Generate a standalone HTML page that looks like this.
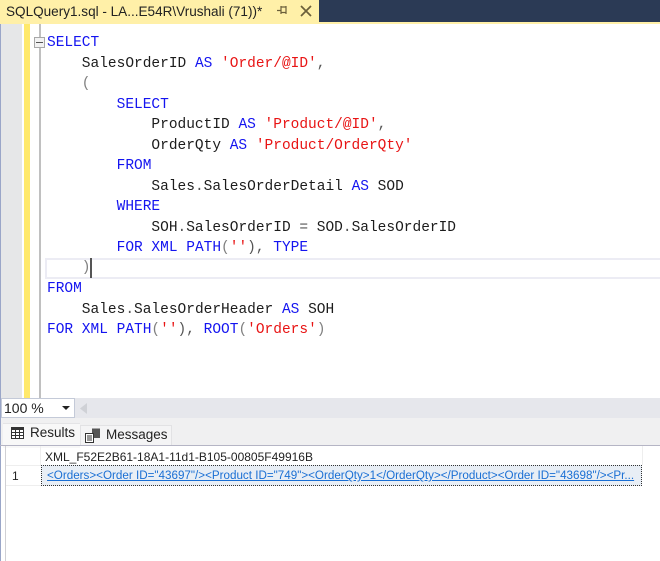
<!DOCTYPE html>
<html><head><meta charset="utf-8"><style>
html,body{margin:0;padding:0;background:#fff}
#p{position:relative;width:660px;height:561px;overflow:hidden;background:#fff;font-family:"Liberation Sans",sans-serif}
.a{position:absolute}
.l{position:absolute;left:47px;font:14.5px/20px "Liberation Mono",monospace;white-space:pre;color:#1c1c1c}
.k{color:#1414f0}.s{color:#e81414}.g{color:#555}.b{color:#808080}
</style></head><body><div id="p">
<div class="a" style="left:0;top:0;width:660px;height:24px;background:#fff0a8"></div>
<div class="a" style="left:319px;top:0;width:341px;height:22px;background:#2b3a55"></div>
<div class="a" style="left:6px;top:1px;font-size:13.56px;line-height:22px;color:#222;white-space:pre">SQLQuery1.sql - LA...E54R\Vrushali (71))*</div>
<svg class="a" style="left:276px;top:3px" width="40" height="16" viewBox="0 0 40 16"><path d="M1 7.500H5M5 3V11M5 4H10V9.500H5M10 3V11" fill="none" stroke="#6b5f3a" stroke-width="1.2"/><path d="M25 3L35 13M35 3L25 13" stroke="#6b5f3a" stroke-width="1.7"/></svg>

<div class="a" style="left:0;top:24px;width:1px;height:537px;background:#9aa6c8"></div>
<div class="a" style="left:1px;top:24px;width:21px;height:374px;background:#e6e7e8"></div>
<div class="a" style="left:24px;top:24px;width:6px;height:374px;background:#ffe96b"></div>
<div class="a" style="left:39px;top:24px;width:2px;height:374px;background:#c0c0c0"></div>
<div class="a" style="left:34px;top:37px;width:9px;height:9px;background:#f2f2f2;border:1px solid #a8a8a8"></div>
<div class="a" style="left:36px;top:42px;width:7px;height:1px;background:#555"></div>

<div class="a" style="left:45px;top:258px;width:615px;height:17px;border:2px solid #ececf4;border-right:0"></div>
<div class="a" style="left:90px;top:258px;width:2px;height:20px;background:#555"></div>

<div class="l" style="top:33px"><span class="k">SELECT</span></div>
<div class="l" style="top:54px">    SalesOrderID <span class="k">AS</span> <span class="s">'Order/@ID'</span><span class="g">,</span></div>
<div class="l" style="top:74px"><span class="b">    (</span></div>
<div class="l" style="top:95px">        <span class="k">SELECT</span></div>
<div class="l" style="top:115px">            ProductID <span class="k">AS</span> <span class="s">'Product/@ID'</span><span class="g">,</span></div>
<div class="l" style="top:136px">            OrderQty <span class="k">AS</span> <span class="s">'Product/OrderQty'</span></div>
<div class="l" style="top:156px">        <span class="k">FROM</span></div>
<div class="l" style="top:177px">            Sales<span class="g">.</span>SalesOrderDetail <span class="k">AS</span> SOD</div>
<div class="l" style="top:197px">        <span class="k">WHERE</span></div>
<div class="l" style="top:218px">            SOH<span class="g">.</span>SalesOrderID <span class="g">=</span> SOD<span class="g">.</span>SalesOrderID</div>
<div class="l" style="top:238px">        <span class="k">FOR XML PATH</span><span class="b">(</span><span class="s">''</span><span class="g">),</span> <span class="k">TYPE</span></div>
<div class="l" style="top:258px"><span class="b">    )</span></div>
<div class="l" style="top:279px"><span class="k">FROM</span></div>
<div class="l" style="top:300px">    Sales<span class="g">.</span>SalesOrderHeader <span class="k">AS</span> SOH</div>
<div class="l" style="top:320px"><span class="k">FOR XML PATH</span><span class="b">(</span><span class="s">''</span><span class="g">),</span> <span class="k">ROOT</span><span class="b">(</span><span class="s">'Orders'</span><span class="b">)</span></div>

<div class="a" style="left:1px;top:398px;width:659px;height:20px;background:#e6e7ec"></div>
<div class="a" style="left:1px;top:398px;width:72px;height:18px;background:#fff;border:1px solid #c4cad8"></div>
<div class="a" style="left:4px;top:399px;font-size:14px;line-height:18px;color:#222">100 %</div>
<svg class="a" style="left:62px;top:406px" width="9" height="6"><path d="M0 0H8L4 4Z" fill="#222"/></svg>
<svg class="a" style="left:79px;top:402px" width="10" height="13"><path d="M8 1V12L1 6.500Z" fill="#cfd1d6"/></svg>

<div class="a" style="left:1px;top:418px;width:659px;height:28px;background:#f0f0f1"></div>
<div class="a" style="left:3px;top:423px;width:77px;height:24px;background:#f8f8f8;border-top:1px solid #e4e4e6"></div>
<div class="a" style="left:80px;top:425px;width:90px;height:20px;background:#f4f4f5;border:1px solid #e2e2e4;border-bottom:0"></div>
<svg class="a" style="left:11px;top:427px" width="14" height="12"><path d="M.5.5H12.500V11.500H.5Z" fill="#fff" stroke="#333"/><path d="M0 .5H13V3H0Z" fill="#333"/><path d="M4.500 3V11M8.500 3V11M1 5.500H12M1 8.500H12" stroke="#333"/></svg>
<div class="a" style="left:30px;top:424px;font-size:13.500px;line-height:18px;color:#222">Results</div>
<svg class="a" style="left:85px;top:428px" width="16" height="15"><path d="M.5 5.500H8.500V14.500H.5Z" fill="#fff" stroke="#333"/><path d="M2 8H7M2 10H7M2 12H7" stroke="#333"/><path d="M7 .5H15V10H9V5H7Z" fill="#555"/></svg>
<div class="a" style="left:106px;top:426px;font-size:13.500px;line-height:18px;color:#222">Messages</div>

<div class="a" style="left:0;top:445px;width:660px;height:1px;background:#b5b5c5"></div>
<div class="a" style="left:5px;top:446px;width:1px;height:115px;background:#d0d0d4"></div>
<div class="a" style="left:40px;top:446px;width:1px;height:19px;background:#eee"></div>
<div class="a" style="left:642px;top:446px;width:1px;height:19px;background:#eee"></div>
<div class="a" style="left:6px;top:465px;width:35px;height:1px;background:#eee"></div>
<div class="a" style="left:6px;top:485px;width:35px;height:1px;background:#eee"></div>
<div class="a" style="left:45px;top:449px;font-size:12px;line-height:16px;color:#222;white-space:pre">XML_F52E2B61-18A1-11d1-B105-00805F49916B</div>
<div class="a" style="left:12px;top:468px;font-size:12px;line-height:16px;color:#222">1</div>
<div class="a" style="left:41px;top:465px;width:599px;height:19px;background:#e8eef5;border:1px dotted #333"></div>
<div class="a" style="left:47px;top:468px;width:590px;font-size:11.65px;line-height:16px;color:#1a6fd4;text-decoration:underline;white-space:pre;overflow:hidden">&lt;Orders&gt;&lt;Order ID="43697"/&gt;&lt;Product ID="749"&gt;&lt;OrderQty&gt;1&lt;/OrderQty&gt;&lt;/Product&gt;&lt;Order ID="43698"/&gt;&lt;Pr...</div>
</div></body></html>
